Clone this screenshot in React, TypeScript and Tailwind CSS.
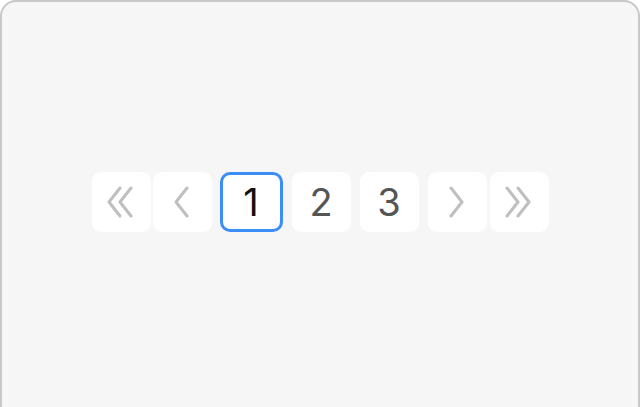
import React from "react";

const Chevron = ({ dir, double }: { dir: "left" | "right"; double?: boolean }) => {
  const w = double ? 30 : 18;
  const pts = (ox: number) =>
    dir === "left"
      ? `M${ox + 14} 2 L${ox + 3} 16 L${ox + 14} 30`
      : `M${ox + 3} 2 L${ox + 14} 16 L${ox + 3} 30`;
  return (
    <svg width={w} height={32} viewBox={`0 0 ${w} 32`} fill="none">
      <path d={pts(0)} stroke="#bfbfbf" strokeWidth={3} strokeLinecap="round" strokeLinejoin="round" />
      {double && (
        <path d={pts(11)} stroke="#bfbfbf" strokeWidth={3} strokeLinecap="round" strokeLinejoin="round" />
      )}
    </svg>
  );
};

export default function App() {
  const btn =
    "flex h-[60px] w-[59px] items-center justify-center rounded-[9px] bg-white";
  return (
    <div className="h-[407px] w-[640px] overflow-hidden bg-white">
      <div
        className="h-[420px] w-full rounded-t-[16px] border-2 border-[#c8c8c8] bg-[#f6f6f6] pt-[170px]"
        style={{ fontFamily: "Inter, 'Noto Sans', sans-serif" }}
      >
        <div className="flex items-start justify-center">
          <div className={btn}>
            <Chevron dir="left" double />
          </div>
          <div className={`${btn} ml-[2px]`}>
            <Chevron dir="left" />
          </div>
          <div className="ml-[8px] flex h-[60px] w-[63px] items-center justify-center rounded-[10px] border-[3px] border-[#3a8ef6] bg-white text-[38px] font-normal leading-none text-[#111111]">
            1
          </div>
          <div className={`${btn} ml-[9px] text-[38px] leading-none text-[#555555]`}>2</div>
          <div className={`${btn} ml-[9px] text-[38px] leading-none text-[#555555]`}>3</div>
          <div className={`${btn} ml-[9px]`}>
            <Chevron dir="right" />
          </div>
          <div className={`${btn} ml-[3px]`}>
            <Chevron dir="right" double />
          </div>
        </div>
      </div>
    </div>
  );
}
